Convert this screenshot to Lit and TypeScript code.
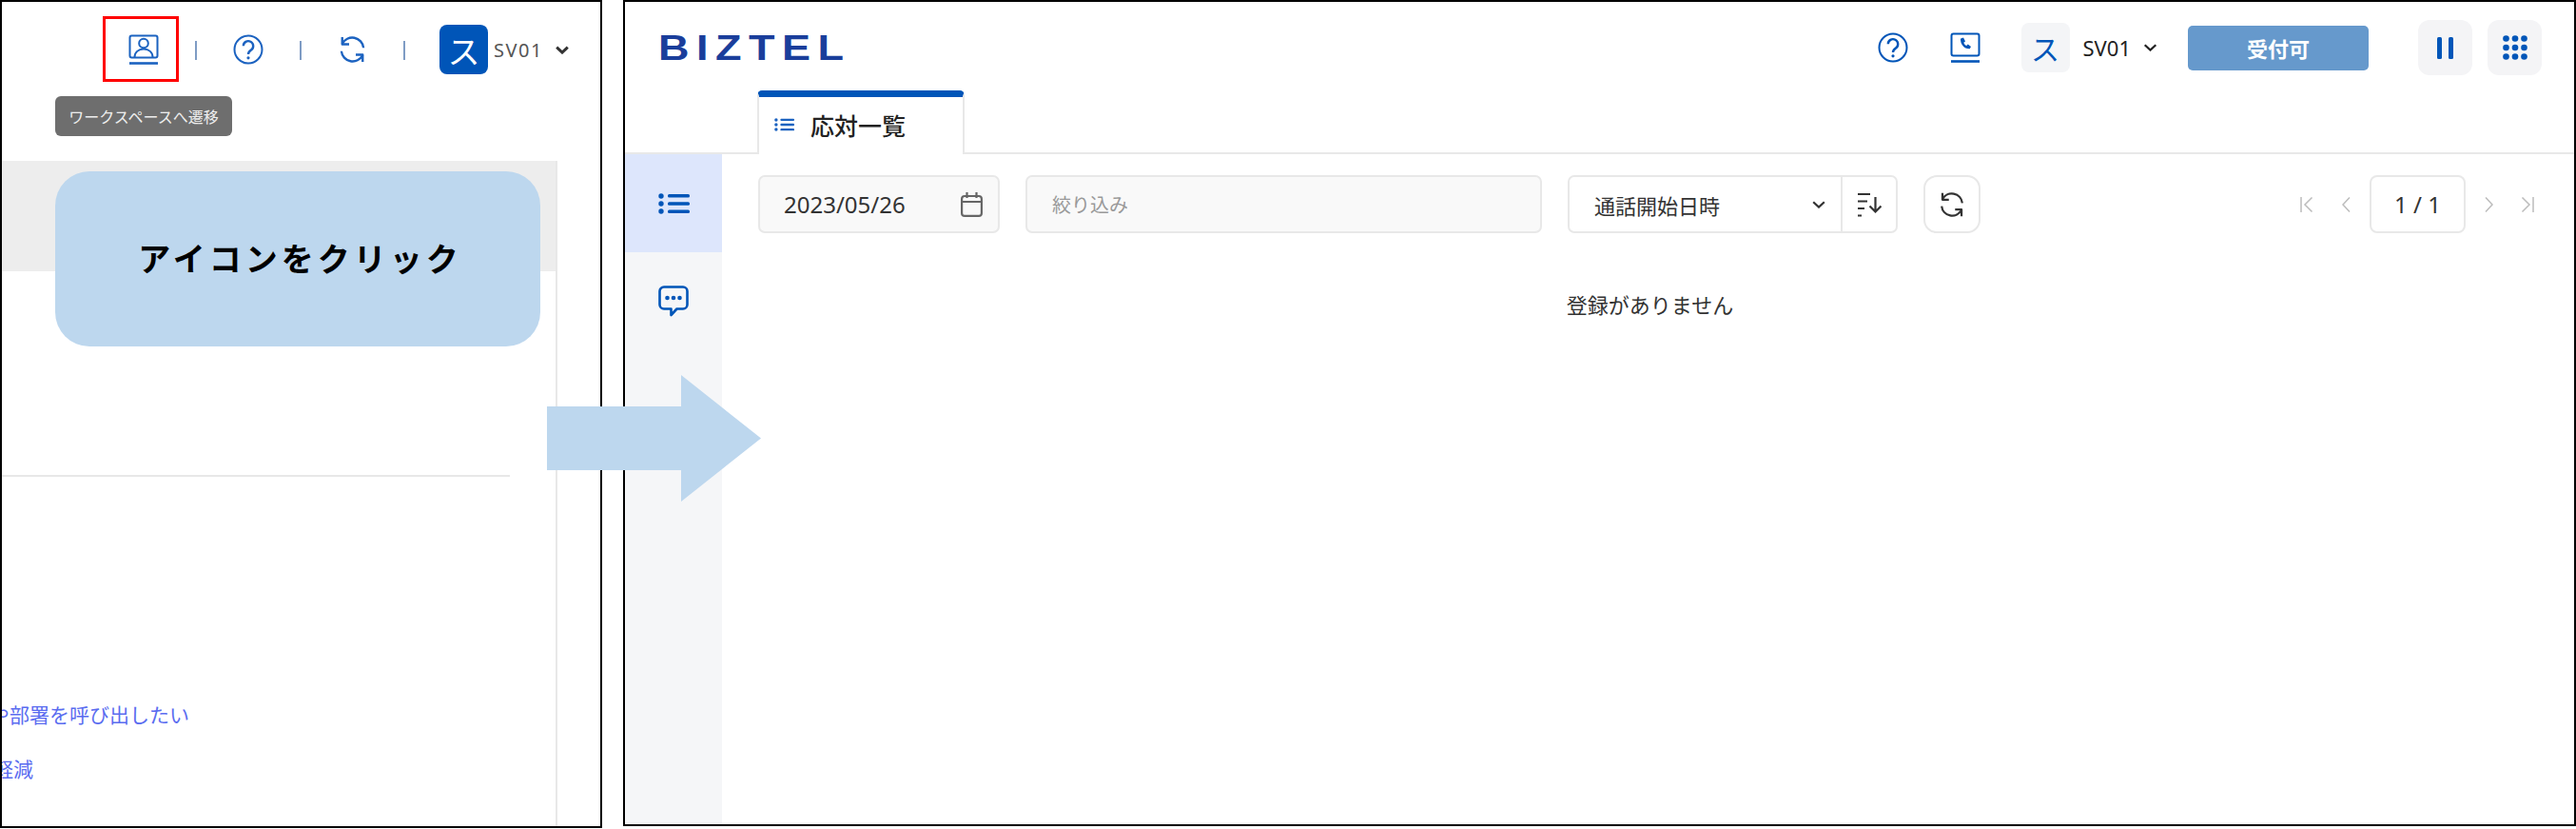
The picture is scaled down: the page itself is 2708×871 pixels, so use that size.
import { LitElement, html, css, svg } from "lit";
import { customElement } from "lit/decorators.js";

const frame = (inner: unknown) => html`<svg class="ic32" viewBox="0 0 32 32" fill="none" stroke="currentColor" stroke-width="2" stroke-linecap="round" stroke-linejoin="round"><rect x="1.5" y="1.5" width="29" height="23" rx="2"/>${inner}<path d="M1 30.5H31" stroke-width="2.6" stroke-linecap="butt"/></svg>`;
const help = html`<svg class="ic32" viewBox="0 0 32 32" fill="none" stroke="currentColor" stroke-width="2"><circle cx="16" cy="16" r="14.5"/><path d="M10.8 12.3a5.2 5.2 0 1 1 8.2 4.3c-2 1.4-3 2.2-3 4.4" stroke-width="2.4"/><circle cx="16" cy="24.8" r="1.6" fill="currentColor" stroke="none"/></svg>`;
const refresh = (cls: string) => html`<svg class=${cls} viewBox="0 0 24 24" fill="none" stroke="currentColor" stroke-width="1.9" stroke-linejoin="round"><path d="M3.4 7.2A9.5 9.5 0 0 1 21.3 10.6"/><path d="M3.4 1.6V7.6H9.2"/><path d="M2.7 13.4A9.5 9.5 0 0 0 20.6 16.8"/><path d="M20.6 22.4V16.4H14.8"/></svg>`;
const listIcon = (cls: string) => html`<svg class=${cls} viewBox="0 0 33 22" fill="currentColor"><circle cx="3" cy="3" r="2.7"/><circle cx="3" cy="11" r="2.7"/><circle cx="3" cy="19" r="2.7"/><rect x="10" y="1" width="23" height="3.6" rx="1.5"/><rect x="10" y="9.2" width="23" height="3.6" rx="1.5"/><rect x="10" y="17.4" width="23" height="3.6" rx="1.5"/></svg>`;
const chev = (cls: string) => html`<svg class=${cls} viewBox="0 0 14 8" fill="none" stroke="currentColor" stroke-width="2.2"><path d="M1.2 1.2L7 6.6L12.8 1.2"/></svg>`;

const person = svg`<circle cx="16" cy="9.5" r="4.8"/><path d="M6.5 24c0-5 4-8.5 9.5-8.5s9.5 3.5 9.5 8.5"/>`;
const handset = svg`<path d="M11.5 6.5l2.5-1 2 4-1.7 1.2c.6 1.6 1.5 2.6 3 3.3l1.4-1.5 3.3 2.5-1.3 2.3c-5.7.4-10-4.8-9.7-10.8z" fill="currentColor" stroke="none"/>`;
const dots = [3.5, 13, 22.5].map((y) => [3.5, 13, 22.5].map((x) => svg`<circle cx=${x} cy=${y} r="3.3"/>`));

@customElement("app-root")
export class AppRoot extends LitElement {
  static styles = css`
    :host { display: block; position: relative; width: 2708px; height: 871px; overflow: hidden; background: #fff; font-family: "Noto Sans", "Noto Sans CJK JP", sans-serif; color: #333; }
    * { box-sizing: border-box; }
    svg { display: block; flex: none; }
    .root { display: flex; align-items: flex-start; gap: 22px; }
    .ic32 { width: 32px; height: 32px; }

    .left { position: relative; flex: none; width: 633px; height: 870px; border: 2px solid #000; overflow: hidden; display: flex; flex-direction: column; }
    .lhead { display: flex; align-items: center; height: 100px; padding-left: 133px; gap: 38px; color: #1b62c0; flex: none; }
    .lsep { width: 2px; height: 20px; background: #7f9cc4; margin-top: 2px; flex: none; }
    .lrefresh { width: 31px; height: 30px; }
    .avatar { width: 51px; height: 52px; border-radius: 8px; background: #0055b8; color: #fff; display: flex; align-items: center; justify-content: center; font-size: 34px; margin-left: -2px; margin-right: -32px; }
    .lname { font-size: 20px; color: #555; letter-spacing: 1.5px; margin-right: -25px; }
    .lchev { width: 14px; height: 9px; color: #333; stroke-width: 3; }
    .card { flex: 1; width: 584px; margin-top: 67px; border-right: 2px solid #e8e8e8; display: flex; flex-direction: column; }
    .cardhead { height: 116px; background: #ededed; flex: none; }
    .hr { height: 2px; width: 534px; background: #e8e8e8; margin-top: 214px; flex: none; }
    .link { width: 197px; height: 30px; overflow: hidden; display: flex; justify-content: flex-end; color: #5a6cf0; font-size: 21px; line-height: 30px; white-space: nowrap; flex: none; }
    .l1 { margin-top: 235px; }
    .l2 { margin-top: 27px; width: 33px; }
    .red { position: absolute; left: 106px; top: 15px; width: 80px; height: 69px; border: 3px solid #f00; }
    .tip { position: absolute; left: 56px; top: 99px; width: 186px; height: 42px; background: #6e6e6e; border-radius: 6px; color: #eee; font-size: 16px; display: flex; align-items: center; justify-content: center; white-space: nowrap; }
    .callout { position: absolute; left: 56px; top: 178px; width: 510px; height: 184px; padding: 0 0 4px 5px; border-radius: 36px; background: #bdd7ee; color: #000; font-size: 34px; font-weight: 700; letter-spacing: 4px; display: flex; align-items: center; justify-content: center; white-space: nowrap; }

    .arrow { position: absolute; left: 575px; top: 394px; width: 225px; height: 133px; }

    .right { flex: 1; height: 868px; border: 2px solid #000; display: flex; flex-direction: column; overflow: hidden; }
    .rhead { display: flex; align-items: center; height: 93px; padding: 3px 34px 0 35px; flex: none; color: #0055b8; }
    .logo { font-family: "Liberation Sans", sans-serif; font-weight: 700; font-size: 36px; line-height: 1; letter-spacing: 6px; color: #1a3e9b; transform: scaleX(1.25); transform-origin: left center; margin-top: 2px; }
    .tools { margin-left: auto; display: flex; align-items: center; }
    .phone { margin-left: 44px; }
    .ravatar { width: 51px; height: 52px; margin-left: 43px; border-radius: 8px; background: #f4f5f7; color: #0055b8; display: flex; align-items: center; justify-content: center; font-size: 30px; }
    .rname { margin-left: 14px; font-size: 22px; color: #222; }
    .rchev { width: 15px; height: 8px; margin-left: 13px; color: #222; }
    .accept { width: 190px; height: 47px; margin-left: 32px; background: #6699cc; border-radius: 5px; color: #fff; font-size: 22px; font-weight: 700; display: flex; align-items: center; justify-content: center; }
    .sq { width: 57px; height: 58px; border-radius: 12px; background: #f4f4f6; display: flex; align-items: center; justify-content: center; }
    .pause { margin-left: 52px; margin-right: 16px; }
    .pause svg { width: 17px; height: 23px; }
    .grid svg { width: 26px; height: 26px; }

    .tabs { height: 67px; border-bottom: 2px solid #e8e8e8; padding-left: 139px; flex: none; }
    .tab { width: 218px; height: 67px; background: #fff; border: 2px solid #e8e8e8; border-top: 7px solid #0055b8; border-bottom: none; border-radius: 5px 5px 0 0; display: flex; align-items: center; padding: 0 0 2px 16px; gap: 17px; color: #222; font-size: 25px; font-weight: 500; }
    .tablist { width: 21px; height: 16px; color: #1b62c0; }

    .main { flex: 1; display: flex; min-height: 0; }
    .side { width: 102px; background: #f5f6f8; flex: none; color: #0055b8; }
    .sitem { height: 103px; display: flex; align-items: center; justify-content: center; }
    .sitem.on { background: #dde6fc; }
    .slist { width: 33px; height: 22px; }
    .schat { width: 32px; height: 33px; }

    .content { flex: 1; padding: 22px 42px 0 38px; min-width: 0; display: flex; flex-direction: column; }
    .bar { display: flex; align-items: stretch; gap: 27px; height: 61px; flex: none; }
    .box { border: 2px solid #e8e8e8; border-radius: 7px; display: flex; align-items: center; }
    .date { width: 254px; background: #f9f9f9; padding: 0 16px 0 25px; justify-content: space-between; font-size: 24px; color: #333; }
    .cal { width: 23px; height: 26px; color: #666; }
    .filter { width: 543px; background: #f9f9f9; padding-left: 26px; font-size: 20px; color: #999; }
    .select { width: 347px; padding-left: 26px; font-size: 22px; color: #333; }
    .seltext { flex: 1; }
    .selchev { width: 14px; height: 8px; color: #333; margin-right: 16px; }
    .sortbox { width: 58px; align-self: stretch; border-left: 2px solid #e8e8e8; display: flex; align-items: center; justify-content: center; color: #333; }
    .sort { width: 26px; height: 26px; }
    .rbtn { width: 60px; border-radius: 14px; justify-content: center; color: #333; }
    .rbtnic { width: 28px; height: 30px; }
    .pager { margin-left: auto; display: flex; align-items: center; gap: 20px; color: #bcbcbc; }
    .pg { width: 14px; height: 16px; }
    .pg2 { width: 9px; height: 16px; }
    .m30 { margin-right: 10px; }
    .m29 { margin-left: 9px; }
    .page { width: 101px; height: 61px; border-radius: 8px; justify-content: center; font-size: 24px; color: #333; }
    .empty { margin-top: 60px; padding-left: 8px; text-align: center; font-size: 22px; line-height: 30px; color: #333; }
  `;

  render() {
    return html`
      <div class="root">
        <section class="left">
          <div class="lhead">
            ${frame(person)}
            <div class="lsep"></div>
            ${help}
            <div class="lsep"></div>
            ${refresh("lrefresh")}
            <div class="lsep"></div>
            <div class="avatar">ス</div>
            <div class="lname">SV01</div>
            ${chev("lchev")}
          </div>
          <div class="card">
            <div class="cardhead"></div>
            <div class="hr"></div>
            <div class="link l1"><span>内線や部署を呼び出したい</span></div>
            <div class="link l2"><span>負荷を軽減</span></div>
          </div>
          <div class="red"></div>
          <div class="tip">ワークスペースへ遷移</div>
          <div class="callout">アイコンをクリック</div>
        </section>

        <section class="right">
          <header class="rhead">
            <div class="logo">BIZTEL</div>
            <div class="tools">
              ${help}
              <div class="phone">${frame(handset)}</div>
              <div class="ravatar">ス</div>
              <div class="rname">SV01</div>
              ${chev("rchev")}
              <div class="accept">受付可</div>
              <div class="sq pause"><svg viewBox="0 0 17 23" fill="currentColor"><rect width="5" height="23" rx="1.5"/><rect x="12" width="5" height="23" rx="1.5"/></svg></div>
              <div class="sq grid"><svg viewBox="0 0 26 26" fill="currentColor">${dots}</svg></div>
            </div>
          </header>
          <div class="tabs">
            <div class="tab">${listIcon("tablist")}<span>応対一覧</span></div>
          </div>
          <div class="main">
            <nav class="side">
              <div class="sitem on">${listIcon("slist")}</div>
              <div class="sitem">
                <svg class="schat" viewBox="0 0 32 33" fill="none" stroke="currentColor" stroke-width="2.6" stroke-linejoin="round"><path d="M6 1.5H26a4.5 4.5 0 0 1 4.5 4.5V20a4.5 4.5 0 0 1-4.5 4.5H19.5L13.500 31V24.500H6A4.500 4.500 0 0 1 1.500 20V6A4.500 4.500 0 0 1 6 1.500Z"/><g fill="currentColor" stroke="none"><circle cx="9.5" cy="13" r="2.3"/><circle cx="16" cy="13" r="2.3"/><circle cx="22.5" cy="13" r="2.3"/></g></svg>
              </div>
            </nav>
            <div class="content">
              <div class="bar">
                <div class="box date">
                  <span>2023/05/26</span>
                  <svg class="cal" viewBox="0 0 23 26" fill="none" stroke="currentColor" stroke-width="2.2"><rect x="1.1" y="4" width="20.8" height="20.9" rx="3"/><path d="M1.1 10H21.9M6.5 0V6M16.5 0V6"/></svg>
                </div>
                <div class="box filter">絞り込み</div>
                <div class="box select">
                  <span class="seltext">通話開始日時</span>
                  ${chev("selchev")}
                  <div class="sortbox">
                    <svg class="sort" viewBox="0 0 26 26" fill="none" stroke="currentColor" stroke-width="2.2"><path d="M1 2H14M1 9.5H11M1 17H8M1 24.5H5"/><path d="M19.5 5V20M13.5 14.5L19.5 20.5L25.5 14.5"/></svg>
                  </div>
                </div>
                <div class="box rbtn">${refresh("rbtnic")}</div>
                <div class="pager">
                  <svg class="pg m30" viewBox="0 0 14 16" fill="none" stroke="currentColor" stroke-width="1.5"><path d="M1 0V16M12.5 .5L5 8L12.5 15.5"/></svg>
                  <svg class="pg2" viewBox="0 0 9 16" fill="none" stroke="currentColor" stroke-width="1.5"><path d="M8 .5L1 8L8 15.5"/></svg>
                  <div class="box page">1 / 1</div>
                  <svg class="pg2" viewBox="0 0 9 16" fill="none" stroke="currentColor" stroke-width="1.5"><path d="M1 .5L8 8L1 15.5"/></svg>
                  <svg class="pg m29" viewBox="0 0 14 16" fill="none" stroke="currentColor" stroke-width="1.5"><path d="M13 0V16M1.5 .5L9 8L1.5 15.5"/></svg>
                </div>
              </div>
              <div class="empty">登録がありません</div>
            </div>
          </div>
        </section>
      </div>
      <svg class="arrow" viewBox="0 0 225 133"><polygon fill="#bdd7ee" points="0,33 141,33 141,0 225,66.5 141,133 141,100 0,100"/></svg>
    `;
  }
}
